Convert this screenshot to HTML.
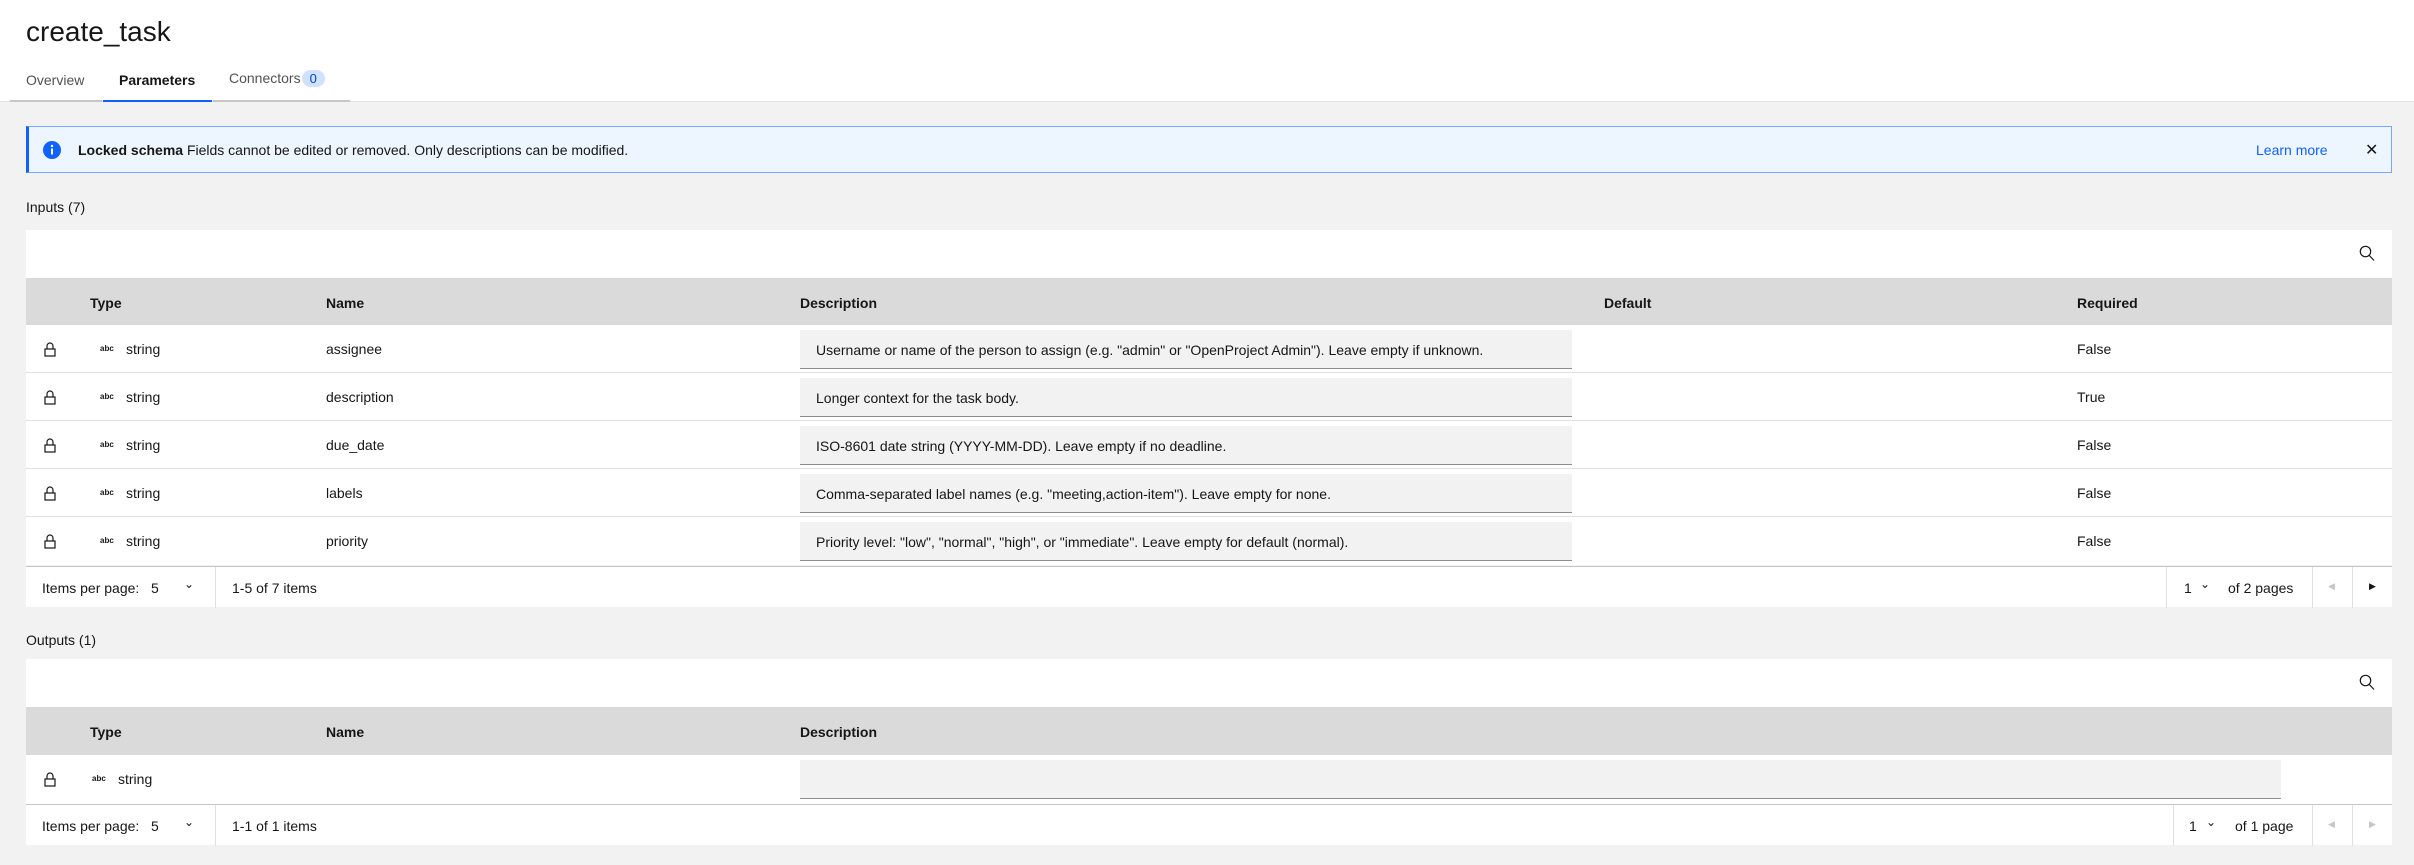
<!DOCTYPE html>
<html><head><meta charset="utf-8"><style>
*{box-sizing:border-box;margin:0;padding:0}
body{width:2414px;height:865px;background:#f2f2f2;font-family:"Liberation Sans",sans-serif;color:#161616;font-size:14px;position:relative;overflow:hidden}
.abs{position:absolute}
.top{position:absolute;left:0;top:0;width:2414px;height:102px;background:#fff;border-bottom:1px solid #e0e0e0}
.title{left:26px;top:16px;font-size:28px;color:#161616}
.tab{top:72px;height:30px;font-size:14px;color:#525252;border-bottom:2px solid #c6c6c6;padding-top:0}
.notif{left:26px;top:126px;width:2366px;height:47px;background:#edf5ff;border:1px solid #78a9ff;border-left:3px solid #0f62fe}
.panel{background:#fff}
.th{background:#dadada;font-weight:bold}
.row{border-bottom:1px solid #e0e0e0;background:#fff}
.desc{position:absolute;left:800px;top:6px;width:772px;height:39px;background:#f2f2f2;border-bottom:1px solid #8d8d8d;padding:12px 16px;font-size:14px}
.pg{background:#fff;border-top:1px solid #c6c6c6}
.vl{position:absolute;top:0;width:1px;height:41px;background:#e0e0e0}
</style></head><body>
<div class="top"></div>
<div class="abs title">create_task</div>
<div class="abs tab" style="left:10px;width:92px;padding-left:16px">Overview</div>
<div class="abs tab" style="left:103px;width:109px;padding-left:16px;color:#161616;font-weight:bold;border-bottom-color:#0f62fe">Parameters</div>
<div class="abs tab" style="left:213px;width:137px;padding-left:16px;top:70px;height:32px">Connectors<span style="display:inline-block;background:#d0e2ff;color:#0043ce;border-radius:10px;padding:1px 8px;font-size:13px;margin-left:1px">0</span></div>

<div class="abs notif">
 <svg class="abs" style="left:14px;top:14px" width="18" height="18" viewBox="0 0 18 18"><circle cx="9" cy="9" r="9" fill="#0f62fe"/><rect x="8" y="7.5" width="2" height="6" fill="#fff"/><circle cx="9" cy="5" r="1.2" fill="#fff"/></svg>
 <div class="abs" style="left:49px;top:15px"><b>Locked schema</b> Fields cannot be edited or removed. Only descriptions can be modified.</div>
 <div class="abs" style="left:2227px;top:15px;color:#0f62fe">Learn more</div>
 <div class="abs" style="left:2336px;top:13px;font-size:16px">✕</div>
</div>

<div class="abs" style="left:26px;top:199px">Inputs (7)</div>
<div class="abs panel" style="left:26px;top:230px;width:2366px;height:48px">
 <svg class="abs" style="left:2333px;top:15px" width="16" height="17" viewBox="0 0 16 17"><circle cx="6.5" cy="6.5" r="5.2" fill="none" stroke="#161616" stroke-width="1.2"/><path d="M10.3 10.5L15 15.5" stroke="#161616" stroke-width="1.2"/></svg>
</div>
<div class="abs th" style="left:26px;top:278px;width:2366px;height:47px">
 <div class="abs" style="left:64px;top:17px">Type</div><div class="abs" style="left:300px;top:17px">Name</div><div class="abs" style="left:774px;top:17px">Description</div><div class="abs" style="left:1578px;top:17px">Default</div><div class="abs" style="left:2051px;top:17px">Required</div>
</div>
<div id="rows"></div>

<div class="abs pg" style="left:26px;top:566px;width:2366px;height:41px">
 <div class="abs" style="left:16px;top:13px">Items per page:&nbsp;&nbsp;&nbsp;5</div>
 <div class="abs" style="left:158px;top:10px;font-size:12px">&#8964;</div>
 <div class="vl" style="left:189px"></div>
 <div class="abs" style="left:206px;top:13px">1-5 of 7 items</div>
 <div class="vl" style="left:2140px"></div>
 <div class="abs" style="left:2158px;top:13px">1</div><div class="abs" style="left:2174px;top:10px;font-size:12px">&#8964;</div>
 <div class="abs" style="left:2202px;top:13px">of 2 pages</div>
 <div class="vl" style="left:2286px"></div>
 <div class="abs" style="left:2302px;top:14px;font-size:9px;color:#c6c6c6">◀</div>
 <div class="vl" style="left:2326px"></div>
 <div class="abs" style="left:2343px;top:14px;font-size:9px">▶</div>
</div>

<div class="abs" style="left:26px;top:632px">Outputs (1)</div>
<div class="abs panel" style="left:26px;top:659px;width:2366px;height:48px">
 <svg class="abs" style="left:2333px;top:15px" width="16" height="17" viewBox="0 0 16 17"><circle cx="6.5" cy="6.5" r="5.2" fill="none" stroke="#161616" stroke-width="1.2"/><path d="M10.3 10.5L15 15.5" stroke="#161616" stroke-width="1.2"/></svg>
</div>
<div class="abs th" style="left:26px;top:707px;width:2366px;height:48px">
 <div class="abs" style="left:64px;top:17px">Type</div><div class="abs" style="left:300px;top:17px">Name</div><div class="abs" style="left:774px;top:17px">Description</div>
</div>
<div class="abs row" style="left:26px;top:755px;width:2366px;height:49px;border-bottom:none">
 <svg class="abs" style="left:18px;top:17px" width="12" height="15" viewBox="0 0 12 15"><path d="M3 7V4a3 3 0 0 1 6 0v3" fill="none" stroke="#161616" stroke-width="1.2"/><rect x="1" y="7" width="10" height="7" fill="none" stroke="#161616" stroke-width="1.2"/></svg>
 <div class="abs" style="left:66px;top:19px;font-size:8px;font-weight:bold">abc</div>
 <div class="abs" style="left:92px;top:16px">string</div>
 <div class="desc" style="left:774px;width:1481px;top:5px"></div>
</div>
<div class="abs pg" style="left:26px;top:804px;width:2366px;height:41px">
 <div class="abs" style="left:16px;top:13px">Items per page:&nbsp;&nbsp;&nbsp;5</div>
 <div class="abs" style="left:158px;top:10px;font-size:12px">&#8964;</div>
 <div class="vl" style="left:189px"></div>
 <div class="abs" style="left:206px;top:13px">1-1 of 1 items</div>
 <div class="vl" style="left:2147px"></div>
 <div class="abs" style="left:2163px;top:13px">1</div><div class="abs" style="left:2180px;top:10px;font-size:12px">&#8964;</div>
 <div class="abs" style="left:2209px;top:13px">of 1 page</div>
 <div class="vl" style="left:2286px"></div>
 <div class="abs" style="left:2302px;top:14px;font-size:9px;color:#c6c6c6">◀</div>
 <div class="vl" style="left:2326px"></div>
 <div class="abs" style="left:2343px;top:14px;font-size:9px;color:#c6c6c6">▶</div>
</div>

<!-- input rows -->
<div class="abs row" style="left:26px;top:325px;width:2366px;height:48px">
 <svg class="abs" style="left:18px;top:17px" width="12" height="15" viewBox="0 0 12 15"><path d="M3 7V4a3 3 0 0 1 6 0v3" fill="none" stroke="#161616" stroke-width="1.2"/><rect x="1" y="7" width="10" height="7" fill="none" stroke="#161616" stroke-width="1.2"/></svg>
 <div class="abs" style="left:74px;top:19px;font-size:8px;font-weight:bold">abc</div><div class="abs" style="left:100px;top:16px">string</div>
 <div class="abs" style="left:300px;top:16px">assignee</div>
 <div class="desc" style="left:774px;top:5px">Username or name of the person to assign (e.g. "admin" or "OpenProject Admin"). Leave empty if unknown.</div>
 <div class="abs" style="left:2051px;top:16px">False</div>
</div>
<div class="abs row" style="left:26px;top:373px;width:2366px;height:48px">
 <svg class="abs" style="left:18px;top:17px" width="12" height="15" viewBox="0 0 12 15"><path d="M3 7V4a3 3 0 0 1 6 0v3" fill="none" stroke="#161616" stroke-width="1.2"/><rect x="1" y="7" width="10" height="7" fill="none" stroke="#161616" stroke-width="1.2"/></svg>
 <div class="abs" style="left:74px;top:19px;font-size:8px;font-weight:bold">abc</div><div class="abs" style="left:100px;top:16px">string</div>
 <div class="abs" style="left:300px;top:16px">description</div>
 <div class="desc" style="left:774px;top:5px">Longer context for the task body.</div>
 <div class="abs" style="left:2051px;top:16px">True</div>
</div>
<div class="abs row" style="left:26px;top:421px;width:2366px;height:48px">
 <svg class="abs" style="left:18px;top:17px" width="12" height="15" viewBox="0 0 12 15"><path d="M3 7V4a3 3 0 0 1 6 0v3" fill="none" stroke="#161616" stroke-width="1.2"/><rect x="1" y="7" width="10" height="7" fill="none" stroke="#161616" stroke-width="1.2"/></svg>
 <div class="abs" style="left:74px;top:19px;font-size:8px;font-weight:bold">abc</div><div class="abs" style="left:100px;top:16px">string</div>
 <div class="abs" style="left:300px;top:16px">due_date</div>
 <div class="desc" style="left:774px;top:5px">ISO-8601 date string (YYYY-MM-DD). Leave empty if no deadline.</div>
 <div class="abs" style="left:2051px;top:16px">False</div>
</div>
<div class="abs row" style="left:26px;top:469px;width:2366px;height:48px">
 <svg class="abs" style="left:18px;top:17px" width="12" height="15" viewBox="0 0 12 15"><path d="M3 7V4a3 3 0 0 1 6 0v3" fill="none" stroke="#161616" stroke-width="1.2"/><rect x="1" y="7" width="10" height="7" fill="none" stroke="#161616" stroke-width="1.2"/></svg>
 <div class="abs" style="left:74px;top:19px;font-size:8px;font-weight:bold">abc</div><div class="abs" style="left:100px;top:16px">string</div>
 <div class="abs" style="left:300px;top:16px">labels</div>
 <div class="desc" style="left:774px;top:5px">Comma-separated label names (e.g. "meeting,action-item"). Leave empty for none.</div>
 <div class="abs" style="left:2051px;top:16px">False</div>
</div>
<div class="abs row" style="left:26px;top:517px;width:2366px;height:48px;border-bottom:none">
 <svg class="abs" style="left:18px;top:17px" width="12" height="15" viewBox="0 0 12 15"><path d="M3 7V4a3 3 0 0 1 6 0v3" fill="none" stroke="#161616" stroke-width="1.2"/><rect x="1" y="7" width="10" height="7" fill="none" stroke="#161616" stroke-width="1.2"/></svg>
 <div class="abs" style="left:74px;top:19px;font-size:8px;font-weight:bold">abc</div><div class="abs" style="left:100px;top:16px">string</div>
 <div class="abs" style="left:300px;top:16px">priority</div>
 <div class="desc" style="left:774px;top:5px">Priority level: "low", "normal", "high", or "immediate". Leave empty for default (normal).</div>
 <div class="abs" style="left:2051px;top:16px">False</div>
</div>
</body></html>
